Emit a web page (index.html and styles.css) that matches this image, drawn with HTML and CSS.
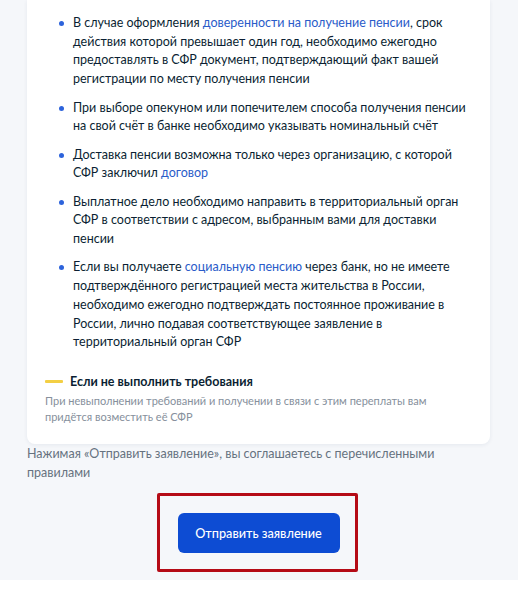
FILE: index.html
```html
<!DOCTYPE html>
<html lang="ru">
<head>
<meta charset="utf-8">
<title>Правила</title>
<link rel="stylesheet" href="styles.css">
</head>
<body>
<div class="page">
  <div class="column">
    <section class="card">
      <ul class="rules">
        <li>В случае оформления <a href="#">доверенности на получение пенсии</a>, срок действия которой превышает один год, необходимо ежегодно предоставлять в СФР документ, подтверждающий факт вашей регистрации по месту получения пенсии</li>
        <li>При выборе опекуном или попечителем способа получения пенсии на свой счёт в банке необходимо указывать номинальный счёт</li>
        <li>Доставка пенсии возможна только через организацию, с которой СФР заключил <a href="#">договор</a></li>
        <li>Выплатное дело необходимо направить в территориальный орган СФР в соответствии с адресом, выбранным вами для доставки пенсии</li>
        <li>Если вы получаете <a href="#">социальную пенсию</a> через банк, но не имеете подтверждённого регистрацией места жительства в России, необходимо ежегодно подтверждать постоянное проживание в России, лично подавая соответствующее заявление в территориальный орган СФР</li>
      </ul>
      <div class="warning">
        <h3 class="warning-title"><span class="warning-bar"></span>Если не выполнить требования</h3>
        <p class="warning-text">При невыполнении требований и получении в связи с этим переплаты вам придётся возместить её СФР</p>
      </div>
    </section>
    <p class="agree">Нажимая «Отправить заявление», вы соглашаетесь с перечисленными правилами</p>
    <div class="actions">
      <div class="highlight">
        <button class="submit" type="button">Отправить заявление</button>
      </div>
    </div>
  </div>
</div>
</body>
</html>
```

FILE: styles.css
```css
html, body {
  margin: 0;
  padding: 0;
  background: #ffffff;
}

body {
  font-family: Lato, "Noto Sans", "Liberation Sans", sans-serif;
  color: #0b1f33;
}

.page {
  background: #f5f7fa;
  height: 580px;
  overflow: hidden;
}

.column {
  width: 463px;
  margin-left: 27px;
}

.card {
  background: #ffffff;
  border-radius: 0 0 8px 8px;
  box-shadow: 0 1px 4px rgba(17, 38, 78, 0.07);
  padding: 14px 22px 18px 18px;
}

.rules {
  list-style: none;
  margin: 0;
  padding: 0 0 0 28px;
  font-size: 12.5px;
  line-height: 18.7px;
}

.rules li {
  position: relative;
  margin-bottom: 9.7px;
}

.rules li:last-child {
  margin-bottom: 0;
}

.rules li::before {
  content: "";
  position: absolute;
  left: -14px;
  top: 7px;
  width: 5px;
  height: 5px;
  border-radius: 50%;
  background: #2d63db;
}

.rules a {
  color: #2a5cc9;
  text-decoration: none;
}

.warning {
  margin-top: 19.5px;
}

.warning-title {
  display: flex;
  align-items: center;
  margin: 0;
  font-size: 12.5px;
  line-height: 19px;
  font-weight: 700;
  color: #0b1f33;
}

.warning-bar {
  display: inline-block;
  width: 18px;
  height: 3px;
  background: #f3cf44;
  border-radius: 1px;
  margin-right: 7px;
}

.warning-text {
  margin: 2px 0 0;
  font-size: 11px;
  line-height: 16.7px;
  color: #86909c;
}

.agree {
  margin: 0;
  font-size: 12.5px;
  line-height: 19px;
  color: #66727f;
}

.actions {
  display: flex;
  justify-content: center;
  margin-top: 11px;
}

.highlight {
  border: 3px solid #b50b16;
  border-radius: 2px;
  padding: 17px 15px 16px 18px;
  margin-left: -3px;
}

.submit {
  display: block;
  width: 162px;
  height: 40px;
  border: 0;
  border-radius: 6px;
  background: #0d4cd3;
  color: #ffffff;
  font-family: Lato, "Noto Sans", "Liberation Sans", sans-serif;
  font-size: 12.7px;
  font-weight: 500;
  cursor: pointer;
}
```
